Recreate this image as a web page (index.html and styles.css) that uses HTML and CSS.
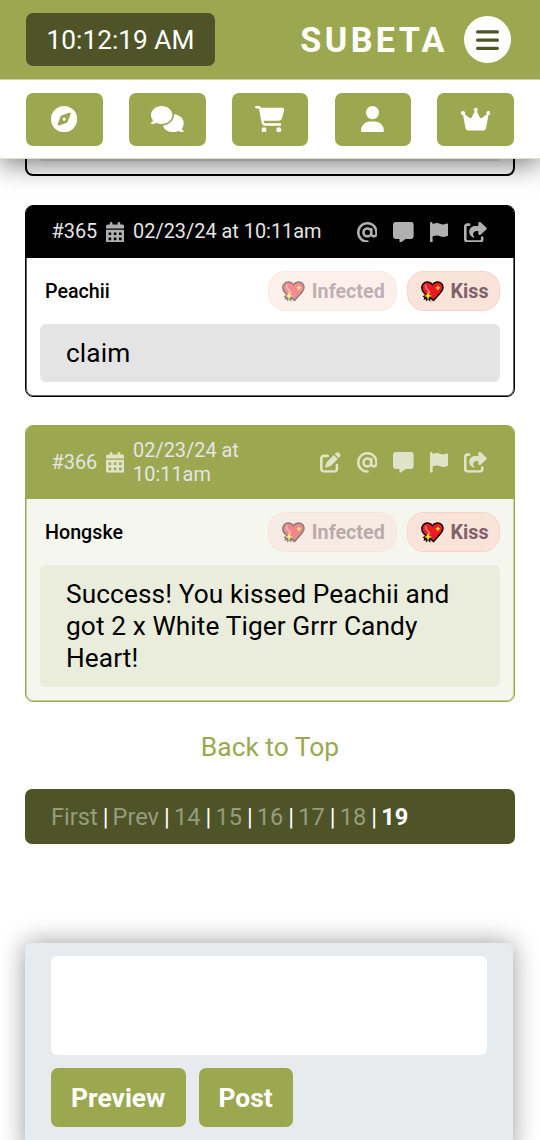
FILE: index.html
```html
<!DOCTYPE html>
<html lang="en">
<head>
<meta charset="utf-8">
<title>Subeta</title>
<link rel="stylesheet" href="styles.css">
</head>
<body>
<svg class="sprite" aria-hidden="true">
  <symbol id="compass" viewBox="0 0 512 512"><path d="M256 512A256 256 0 1 0 256 0a256 256 0 1 0 0 512zm50.7-186.9L162.4 380.6c-19.4 7.5-38.5-11.6-31-31l55.5-144.3c3.3-8.5 9.9-15.1 18.4-18.4l144.3-55.5c19.4-7.5 38.5 11.6 31 31L325.1 306.7c-3.2 8.5-9.9 15.1-18.4 18.4zM288 256a32 32 0 1 0 -64 0 32 32 0 1 0 64 0z"/></symbol>
  <symbol id="comments" viewBox="0 0 640 512"><path d="M208 352c114.9 0 208-78.8 208-176S322.9 0 208 0S0 78.8 0 176c0 38.6 14.7 74.3 39.6 103.4c-3.5 9.4-8.7 17.7-14.2 24.7c-4.8 6.2-9.7 11-13.3 14.3c-1.8 1.6-3.3 2.9-4.3 3.7c-.5 .4-.9 .7-1.1 .8l-.2 .2C1 327.2-1.4 334.4 .8 340.9S9.1 352 16 352c21.8 0 43.8-5.6 62.1-12.5c9.2-3.5 17.8-7.4 25.2-11.4C134.1 343.3 169.8 352 208 352zM448 176c0 112.3-99.1 196.9-216.5 207C255.8 457.4 336.4 512 432 512c38.2 0 73.9-8.7 104.7-23.9c7.5 4 16 7.9 25.2 11.4c18.3 6.9 40.3 12.5 62.1 12.5c6.9 0 13.1-4.5 15.2-11.1c2.1-6.6-.2-13.8-5.8-17.9l-.2-.2c-.2-.2-.6-.4-1.1-.8c-1-.8-2.5-2-4.3-3.7c-3.6-3.3-8.5-8.1-13.3-14.3c-5.5-7-10.7-15.4-14.2-24.7c24.9-29 39.6-64.7 39.6-103.4c0-92.8-84.9-168.9-192.6-175.5c.4 5.1 .6 10.3 .6 15.5z"/></symbol>
  <symbol id="cart" viewBox="0 0 576 512"><path d="M0 24C0 10.7 10.7 0 24 0H69.5c22 0 41.5 12.8 50.6 32h411c26.3 0 45.5 25 38.6 50.4l-41 152.3c-8.5 31.4-37 53.3-69.5 53.3H170.7l5.4 28.5c2.2 11.3 12.1 19.5 23.6 19.5H488c13.3 0 24 10.7 24 24s-10.7 24-24 24H199.7c-34.6 0-64.3-24.6-70.7-58.5L77.4 54.5c-.7-3.8-4-6.5-7.9-6.5H24C10.7 48 0 37.3 0 24zM128 464a48 48 0 1 1 96 0 48 48 0 1 1 -96 0zm336-48a48 48 0 1 1 0 96 48 48 0 1 1 0-96z"/></symbol>
  <symbol id="user" viewBox="0 0 448 512"><path d="M224 256A128 128 0 1 0 224 0a128 128 0 1 0 0 256zm-45.7 48C79.8 304 0 383.8 0 482.3C0 498.7 13.3 512 29.7 512H418.3c16.4 0 29.7-13.3 29.7-29.7C448 383.8 368.2 304 269.7 304H178.3z"/></symbol>
  <symbol id="crown" viewBox="0 0 576 512"><path d="M309 106c11.4-7 19-19.7 19-34c0-22.1-17.9-40-40-40s-40 17.9-40 40c0 14.4 7.6 27 19 34L209.7 220.6c-9.1 18.2-32.7 23.4-48.6 10.7L72 160c5-6.7 8-15 8-24c0-22.1-17.9-40-40-40S0 113.9 0 136s17.9 40 40 40c.2 0 .5 0 .7 0L86.4 427.4c5.5 30.4 32 52.6 63 52.6H426.6c30.9 0 57.4-22.1 63-52.6L535.3 176c.2 0 .5 0 .7 0c22.1 0 40-17.9 40-40s-17.9-40-40-40s-40 17.9-40 40c0 9 3 17.3 8 24l-89.1 71.3c-15.9 12.7-39.5 7.5-48.6-10.7L309 106z"/></symbol>
  <symbol id="bars" viewBox="0 0 448 512"><path d="M0 96C0 78.3 14.3 64 32 64H416c17.7 0 32 14.3 32 32s-14.3 32-32 32H32C14.3 128 0 113.7 0 96zM0 256c0-17.7 14.3-32 32-32H416c17.7 0 32 14.3 32 32s-14.3 32-32 32H32c-17.7 0-32-14.3-32-32zM448 416c0 17.7-14.3 32-32 32H32c-17.7 0-32-14.3-32-32s14.3-32 32-32H416c17.7 0 32 14.3 32 32z"/></symbol>
  <symbol id="calendar" viewBox="0 0 448 512"><path fill-rule="evenodd" d="M128 0c17.7 0 32 14.3 32 32V64H288V32c0-17.7 14.3-32 32-32s32 14.3 32 32V64h48c26.5 0 48 21.5 48 48v48H0V112C0 85.5 21.5 64 48 64H96V32c0-17.7 14.3-32 32-32zM0 192H448V464c0 26.5-21.5 48-48 48H48c-26.5 0-48-21.5-48-48V192zM64 256h64v64H64zM192 256h64v64h-64zM320 256h64v64h-64zM64 384h64v64H64zM192 384h64v64h-64zM320 384h64v64h-64z"/></symbol>
  <symbol id="at" viewBox="0 0 512 512"><path d="M256 64C150 64 64 150 64 256s86 192 192 192c17.7 0 32 14.3 32 32s-14.3 32-32 32C114.6 512 0 397.4 0 256S114.6 0 256 0S512 114.6 512 256v32c0 53-43 96-96 96c-29.3 0-55.6-13.2-73.2-33.9C320 371.1 289.5 384 256 384c-70.7 0-128-57.3-128-128s57.3-128 128-128c27.9 0 53.7 8.9 74.7 24.1c5.7-5 13.1-8.1 21.3-8.1c17.7 0 32 14.3 32 32v80 32c0 17.7 14.3 32 32 32s32-14.3 32-32V256c0-106-86-192-192-192zm64 192a64 64 0 1 0 -128 0 64 64 0 1 0 128 0z"/></symbol>
  <symbol id="message" viewBox="0 0 512 512"><path d="M64 0C28.7 0 0 28.7 0 64V352c0 35.3 28.7 64 64 64h96v80c0 6.1 3.4 11.6 8.8 14.3s11.9 2.1 16.8-1.5L309.3 416H448c35.3 0 64-28.7 64-64V64c0-35.3-28.7-64-64-64H64z"/></symbol>
  <symbol id="flag" viewBox="0 0 448 512"><path d="M64 32C64 14.3 49.7 0 32 0S0 14.3 0 32V64 368 480c0 17.7 14.3 32 32 32s32-14.3 32-32V352l64.3-16.1c41.1-10.3 84.6-5.5 122.5 13.4c44.2 22.1 95.5 24.8 141.7 7.4l34.7-13c12.5-4.7 20.8-16.6 20.8-30V66.1c0-23-24.2-38-44.8-27.7l-9.6 4.8c-46.3 23.2-100.8 23.2-147.1 0c-35.1-17.6-75.4-22-113.5-12.5L64 48V32z"/></symbol>
  <symbol id="share" viewBox="0 0 576 512"><path d="M352 224H305.5c-45 0-81.5 36.5-81.5 81.5c0 22.3 10.3 34.3 19.2 40.5c6.8 4.7 12.8 12 12.8 20.3c0 9.8-8 17.8-17.8 17.8h-2.5c-2.4 0-4.8-.4-7.1-1.4C210.8 374.8 128 333.4 128 240c0-79.5 64.5-144 144-144h80V34.7C352 15.5 367.5 0 386.7 0c8.6 0 16.8 3.2 23.2 8.9L548.1 133.3c7.6 6.8 11.9 16.5 11.9 26.7s-4.3 19.9-11.9 26.7l-139 125.1c-5.9 5.3-13.5 8.2-21.4 8.2H384c-17.7 0-32-14.3-32-32V224zM80 96c-8.8 0-16 7.2-16 16V432c0 8.8 7.2 16 16 16H400c8.8 0 16-7.2 16-16V384c0-17.7 14.3-32 32-32s32 14.3 32 32v48c0 44.2-35.8 80-80 80H80c-44.2 0-80-35.8-80-80V112C0 67.8 35.8 32 80 32h48c17.7 0 32 14.3 32 32s-14.3 32-32 32H80z"/></symbol>
  <symbol id="edit" viewBox="0 0 512 512"><path d="M471.6 21.7c-21.9-21.9-57.3-21.9-79.2 0L362.3 51.7l97.9 97.9 30.1-30.1c21.9-21.9 21.9-57.3 0-79.2L471.6 21.7zm-299.2 220c-6.1 6.1-10.8 13.6-13.5 21.9l-29.6 88.8c-2.9 8.6-.6 18.1 5.8 24.6s15.9 8.7 24.6 5.8l88.8-29.6c8.2-2.7 15.7-7.4 21.9-13.5L437.7 172.3 339.7 74.3 172.4 241.7zM96 64C43 64 0 107 0 160V416c0 53 43 96 96 96H352c53 0 96-43 96-96V320c0-17.7-14.3-32-32-32s-32 14.3-32 32v96c0 17.7-14.3 32-32 32H96c-17.7 0-32-14.3-32-32V160c0-17.7 14.3-32 32-32h96c17.7 0 32-14.3 32-32s-14.3-32-32-32H96z"/></symbol>
  <symbol id="heart" viewBox="0 0 22 20">
    <path d="M11 3.5C13 .2 17.5 .2 19.8 2.5c2 2.7 1.2 6-1 8.5L12 18.5 3 11.5C.4 8.5.4 5 2.2 2.5 4.5.2 9 .4 11 3.5z" fill="#ea1a25" stroke="#120304" stroke-width="1.4"/>
    <path d="M5 3.5C3.7 5 4.8 7.2 6.5 8.5s2 2 1.5 3.5" fill="none" stroke="#f56f6c" stroke-width="1.8"/>
    <path d="M3.5 13l-2 1.7 1.5 1-.5 2.3 2-.5.8 2 1.4-1.8 2.4 2-.2-2.7 1.8-.3-2-2.5z" fill="#1a0805"/>
    <path d="M6.700 10.800l.9 2.500 2.300.9-2.300.9-.9 2.500-.9-2.500-2.300-.9 2.300-.9zM16.200 4.400l.6 1.500 1.500.6-1.500.6-.6 1.600-.6-1.600-1.500-.6 1.500-.6z" fill="#ffee14" stroke="#ffee14" stroke-width=".4"/>
  </symbol>
</svg>

<header class="topbar">
  <div class="clock">10:12:19 AM</div>
  <div class="brand">SUBETA</div>
  <div class="menu"><svg class="icon w448"><use href="#bars"/></svg></div>
</header>
<nav class="nav">
  <a class="nav-item"><svg class="icon"><use href="#compass"/></svg></a>
  <a class="nav-item"><svg class="icon w640"><use href="#comments"/></svg></a>
  <a class="nav-item"><svg class="icon w576"><use href="#cart"/></svg></a>
  <a class="nav-item"><svg class="icon w448"><use href="#user"/></svg></a>
  <a class="nav-item"><svg class="icon w576"><use href="#crown"/></svg></a>
</nav>

<main class="thread">
  <div class="post-tail"><div class="tail-text"></div></div>

  <article class="post">
    <div class="post-head">
      <span>#365</span><svg class="icon w448 date-icon"><use href="#calendar"/></svg>
      <span class="date">02/23/24 at 10:11am</span>
      <div class="actions">
        <svg class="icon"><use href="#at"/></svg>
        <svg class="icon"><use href="#message"/></svg>
        <svg class="icon w448"><use href="#flag"/></svg>
        <svg class="icon w576"><use href="#share"/></svg>
      </div>
    </div>
    <div class="author">
      <span class="name">Peachii</span>
      <span class="pill faded"><svg class="heart"><use href="#heart"/></svg>Infected</span>
      <span class="pill"><svg class="heart"><use href="#heart"/></svg>Kiss</span>
    </div>
    <div class="text">claim</div>
  </article>

  <article class="post own">
    <div class="post-head">
      <span>#366</span><svg class="icon w448 date-icon"><use href="#calendar"/></svg>
      <span class="date">02/23/24 at 10:11am</span>
      <div class="actions">
        <svg class="icon"><use href="#edit"/></svg>
        <svg class="icon"><use href="#at"/></svg>
        <svg class="icon"><use href="#message"/></svg>
        <svg class="icon w448"><use href="#flag"/></svg>
        <svg class="icon w576"><use href="#share"/></svg>
      </div>
    </div>
    <div class="author">
      <span class="name">Hongske</span>
      <span class="pill faded"><svg class="heart"><use href="#heart"/></svg>Infected</span>
      <span class="pill"><svg class="heart"><use href="#heart"/></svg>Kiss</span>
    </div>
    <div class="text">Success! You kissed Peachii and got 2 x White Tiger Grrr Candy Heart!</div>
  </article>

  <a class="to-top">Back to Top</a>

  <div class="pager"><a>First</a><i>|</i><a>Prev</a><i>|</i><a>14</a><i>|</i><a>15</a><i>|</i><a>16</a><i>|</i><a>17</a><i>|</i><a>18</a><i>|</i><b>19</b></div>

  <form class="reply">
    <div class="editor"></div>
    <div class="buttons"><button type="button" class="btn">Preview</button><button type="button" class="btn">Post</button></div>
  </form>
</main>
</body>
</html>
```
FILE: styles.css
```css
* { box-sizing: border-box; }

body {
  margin: 0;
  height: 1140px;
  overflow: hidden;
  background: #fff;
  color: #000;
  font-family: Roboto, sans-serif;
  font-size: 26.25px;
}

.sprite { display: none; }

.icon {
  display: block;
  flex: none;
  width: 1em;
  height: 1em;
  fill: currentColor;
}
.icon.w448 { width: .875em; }
.icon.w576 { width: 1.125em; }
.icon.w640 { width: 1.25em; }

.topbar {
  position: relative;
  z-index: 2;
  display: flex;
  align-items: center;
  height: 80px;
  padding: 0 29px 0 26px;
  background: #9ca850;
  border-bottom: 1px solid #cdd3a7;
}
.clock {
  width: 189px;
  height: 53px;
  border-radius: 7px;
  background: #4e5427;
  color: #fff;
  line-height: 54px;
  text-align: center;
}
.brand {
  margin-left: auto;
  color: #fff;
  font-size: 34.2px;
  font-weight: 700;
  letter-spacing: 3.4px;
}
.menu {
  display: flex;
  align-items: center;
  justify-content: center;
  width: 47px;
  height: 47px;
  margin-left: 16px;
  border-radius: 50%;
  background: #fff;
  color: #4e5427;
}
.menu .icon { margin-top: 1px; }

.nav {
  position: relative;
  z-index: 1;
  display: flex;
  gap: 26.2px;
  height: 79px;
  padding: 12.5px 26px 0;
  background: #fff;
  border-bottom: 1px solid #dfe2c8;
  box-shadow: 0 6px 26px rgba(0, 0, 0, .5);
}
.nav-item {
  display: flex;
  flex: 1;
  align-items: center;
  justify-content: center;
  height: 53px;
  border-radius: 7px;
  background: #9ca850;
  color: #fff;
}

.thread { padding: 0 25px; }

.post-tail {
  height: 17px;
  margin-bottom: 29px;
  padding: 0 13px;
  border: 2px solid #000;
  border-top: 0;
  border-radius: 0 0 8px 8px;
}
.tail-text {
  height: 2px;
  border-radius: 0 0 6px 6px;
  background: #e4e4e4;
}

.post {
  --accent: #000;
  --edge: rgba(0, 0, 0, .6);
  margin-bottom: 28px;
  padding-bottom: 14px;
  border: 1px solid var(--accent);
  border-radius: 8px;
  box-shadow: inset 0 0 0 1px var(--edge);
  overflow: hidden;
}
.post.own {
  --accent: #9ca850;
  --edge: rgba(156, 168, 80, .5);
  background: #f5f6ee;
}
.post-head {
  display: flex;
  align-items: center;
  height: 52px;
  padding: 0 26.8px 0 25.5px;
  background: var(--accent);
  color: #e5e5e5;
  font-size: 19.9px;
  line-height: 24px;
}
.own .post-head { height: 73px; }
.date-icon {
  margin: 0 8.8px;
  color: #b0b0b0;
}
.own .date-icon, .own .actions { color: #dfe3c8; }
.post-head .icon { font-size: 20.8px; }
.actions {
  display: flex;
  gap: 15.8px;
  margin-left: auto;
  color: #b0b0b0;
}
.own .date { width: 130px; }

.author {
  display: flex;
  align-items: center;
  gap: 10px;
  height: 66px;
  padding: 0 14px 0 19px;
  font-size: 19.7px;
}
.name {
  margin-right: auto;
  padding-top: 1px;
  font-weight: 500;
}
.pill {
  display: flex;
  align-items: center;
  gap: 7px;
  height: 40px;
  padding: 1px 10.5px 0 12.5px;
  border: 1px solid #f5d5cc;
  border-radius: 17px;
  background: #fae3d9;
  color: #80616b;
  font-weight: 700;
}
.pill.faded {
  padding-right: 11.3px;
  opacity: .5;
}
.heart {
  width: 23px;
  height: 21px;
}

.text {
  margin: 0 14px;
  padding: 13px 26px;
  border-radius: 6px;
  background: #e4e4e4;
  letter-spacing: .1px;
  line-height: 32px;
}
.own .text { background: #eaeddc; }

.to-top {
  display: block;
  margin-top: 29px;
  color: #9ca850;
  font-size: 26.4px;
  line-height: 32px;
  text-align: center;
}

.pager {
  display: flex;
  align-items: center;
  height: 55px;
  margin-top: 26px;
  padding: 0 26px;
  border-radius: 7px;
  background: #4e5427;
  color: #fff;
  font-size: 23.6px;
}
.pager a { color: #969c7c; }
.pager i {
  margin: 0 4.15px 0 5px;
  font-style: normal;
}

.reply {
  width: 487.5px;
  height: 210px;
  margin-top: 99px;
  padding: 13px 26px 0;
  border-radius: 6px;
  background: #e7ebee;
  box-shadow: 0 0 26px rgba(0, 0, 0, .4);
}
.editor {
  height: 99px;
  border-radius: 6px;
  background: #fff;
}
.buttons {
  display: flex;
  gap: 13px;
  margin-top: 13px;
}
.btn {
  height: 59px;
  padding: 1px 20px 0;
  border: 0;
  border-radius: 7px;
  background: #9ca850;
  color: #fff;
  font: 700 26.4px Roboto, sans-serif;
}
```
